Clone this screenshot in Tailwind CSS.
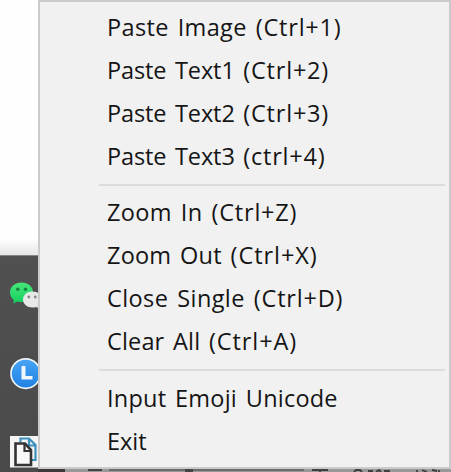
<!DOCTYPE html>
<html lang="en">
<head>
<meta charset="utf-8">
<title>Tray menu</title>
<script src="https://cdn.jsdelivr.net/npm/@tailwindcss/browser@4"></script>
</head>
<body class="relative w-[451px] h-[472px] overflow-hidden bg-[#fefefe] font-['Open_Sans','Noto_Sans',sans-serif] text-[#151515]">
  <!-- Taskbar strip behind the menu -->
  <div class="flex h-[472px] flex-col">
    <div class="h-[239px]"></div>
    <div class="h-[16px] bg-linear-to-b from-[#fefefe] to-[#e6e6e6]"></div>
    <div class="flex-1 border-t border-[#858585] bg-linear-to-b from-[#505050] to-[#4a4a4a] pl-[10px]">
      <svg class="mt-[26px] block h-[28px] w-[34px]" viewBox="10 282 34 28">
        <defs><linearGradient id="g" x1="0" y1="0" x2="0" y2="1"><stop offset="0" stop-color="#48e779"/><stop offset="1" stop-color="#13cf61"/></linearGradient></defs>
        <path d="M21.5 282.5c-6.500 0-11.500 4.300-11.500 9.700 0 3.300 1.500 6 4 7.700l-.7 3.500 4-2c1.300.4 2.700.6 4.200.6 6.400 0 11.500-4.300 11.500-9.800s-5.100-9.700-11.500-9.700z" fill="url(#g)"/>
        <circle cx="17.800" cy="289.300" r="1.700" fill="#18803f"/><circle cx="25.500" cy="289.300" r="1.700" fill="#18803f"/>
        <path d="M32.500 291.500c-5.300 0-9.500 3.500-9.500 8s4.200 8 9.500 8c1.300 0 2.500-.2 3.600-.6l3.400 1.600-.6-3c2-1.500 3.200-3.600 3.200-6 0-4.500-4.300-8-9.600-8z" fill="#e8e8e8"/>
        <circle cx="28.800" cy="297" r="1.400" fill="#858585"/><circle cx="35.300" cy="297" r="1.400" fill="#858585"/>
      </svg>
      <svg class="mt-[48px] block h-[32px] w-[32px]" viewBox="10 358 32 32">
        <defs><linearGradient id="b" x1="0" y1="0" x2="0" y2="1"><stop offset="0" stop-color="#48a5f5"/><stop offset="1" stop-color="#1f80e2"/></linearGradient></defs>
        <circle cx="25.700" cy="373.600" r="14.700" fill="url(#b)" stroke="#eef4fa" stroke-width="1.700"/>
        <path d="M21.500 366.500q2-1.500 4 0v9.500h7v3.500h-11z" fill="#f2f7fd"/>
      </svg>
      <svg class="mt-[46px] block h-[32px] w-[32px]" viewBox="10 436 32 32">
        <path d="M10 436h32v31.500H10z" fill="#f5f5f5"/>
        <path d="M20.500 442v-3.500h8.500l6.500 6.500V460h-4M29 439v6.500h6" fill="none" stroke="#3d8fbd" stroke-width="2.200"/>
        <path d="M15.500 443.500h9.500l6 6.500V465H15.500z" fill="#f8f8f8" stroke="#333" stroke-width="2.600"/>
        <path d="M24.500 444v7H31" fill="none" stroke="#333" stroke-width="2.200"/>
      </svg>
    </div>
  </div>
  <!-- Fragments of the taskbar and window visible under the menu -->
  <svg class="absolute bottom-0 left-[38px] h-[4px] w-[413px]" viewBox="38 468 413 4">
    <path d="M38 468h413v4H38z" fill="#999"/>
    <path d="M38 468h27v4H38z" fill="#3c3838"/>
    <path d="M88 469h14v2H88zM185 469h8v3h-8z" fill="#444"/>
    <path d="M109 469h76v2h-76zM193 469h111v2H193z" fill="#6c6c6c"/>
    <path d="M312 470h16M320 470v2M354 472l2-2h4l2 2M368 471h5M376 472l3-2 2 2M384 471h5v1M417 470v2M422 470l5 2M432 470l5 1M439 470v2" stroke="#3f3f3f" stroke-width="1.800" fill="none"/>
  </svg>
  <!-- Context menu -->
  <div class="absolute left-[38px] top-0 flex h-[469px] w-[413px] flex-col border-2 border-[#cbcbcb] bg-[#f1f1f1] pt-[4px] text-[23.500px] leading-[43px] whitespace-nowrap [word-spacing:2.500px]">
    <div class="flex h-[172px] flex-col pl-[67px]">
      <div class="h-[43px] tracking-[0.35px]">Paste Image <span class="tracking-[0.8px]">(Ctrl+1)</span></div>
      <div class="h-[43px] tracking-[-0.1px]">Paste Text1 <span class="tracking-[0.8px]">(Ctrl+2)</span></div>
      <div class="h-[43px] tracking-[-0.1px]">Paste Text2 <span class="tracking-[0.8px]">(Ctrl+3)</span></div>
      <div class="h-[43px] tracking-[-0.1px]">Paste Text3 <span class="tracking-[0.8px]">(ctrl+4)</span></div>
    </div>
    <div class="flex h-[13px] items-center pl-[59px] pr-[4px]"><div class="h-[2px] w-full bg-[#dcdcdc]"></div></div>
    <div class="flex h-[172px] flex-col pl-[67px]">
      <div class="h-[43px] tracking-[0.35px]">Zoom In <span class="tracking-[0.8px]">(Ctrl+Z)</span></div>
      <div class="h-[43px] tracking-[0.2px]">Zoom Out <span class="tracking-[0.95px]">(Ctrl+X)</span></div>
      <div class="h-[43px] tracking-[0.4px]">Close Single <span class="tracking-[0.8px]">(Ctrl+D)</span></div>
      <div class="h-[43px] tracking-[0.15px]">Clear All <span class="tracking-[0.9px]">(Ctrl+A)</span></div>
    </div>
    <div class="flex h-[14px] items-center pl-[59px] pr-[4px]"><div class="h-[2px] w-full bg-[#dcdcdc]"></div></div>
    <div class="flex h-[86px] flex-col pl-[67px]">
      <div class="h-[43px] tracking-[0.22px]">Input Emoji Unicode</div>
      <div class="h-[43px]">Exit</div>
    </div>
  </div>
</body>
</html>
